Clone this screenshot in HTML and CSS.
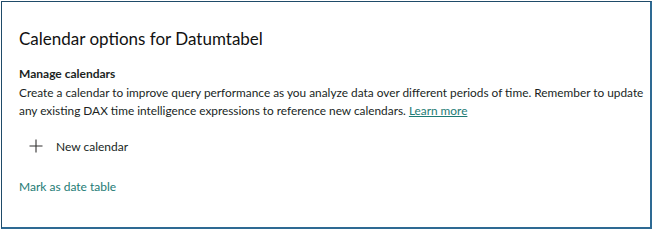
FILE: index.html
```html
<!DOCTYPE html>
<html>
<head>
<meta charset="utf-8">
<link rel="stylesheet" href="styles.css">
</head>
<body>
<div class="frame">
  <h1 class="title">Calendar options for Datumtabel</h1>
  <h2 class="subtitle">Manage calendars</h2>
  <p class="desc">Create a calendar to improve query performance as you analyze data over different periods of time. Remember to update any existing DAX time intelligence expressions to reference new calendars. <a class="link" href="#">Learn more</a></p>
  <div class="new">
    <svg class="plus" width="14" height="14" viewBox="0 0 14 14"><path d="M7 0.5V13.5M0.5 7H13.5" stroke="#323130" stroke-width="1.1" fill="none"/></svg>
    <span>New calendar</span>
  </div>
  <div class="mark">Mark as date table</div>
</div>
</body>
</html>
```
FILE: styles.css
```css
html, body { margin: 0; padding: 0; background: #fff; }
body { width: 653px; height: 230px; overflow: hidden; font-family: Lato, "Open Sans", sans-serif; color: #201f1e; }
.frame {
  box-sizing: border-box;
  margin: 1px 1px 0 1px;
  width: 651px;
  height: 228px;
  border: 1px solid #1f4b69;
  border-right: 2px solid #2e6a93;
  border-bottom: 2px solid #2e6a93;
  padding: 25px 0 0 17px;
}
.title { margin: 0; font-size: 17px; font-weight: 400; line-height: 24px; color: #111; }
.subtitle { margin: 14px 0 0; font-size: 12px; font-weight: 700; line-height: 18px; }
.desc { margin: 1px 0 0; font-size: 11.85px; line-height: 18px; width: 628px; }
.link { color: #1d7b75; text-decoration: underline; }
.new { display: flex; align-items: center; gap: 13px; margin: 16px 0 0 10px; font-size: 12px; height: 20px; }
.mark { margin-top: 22px; font-size: 12px; color: #1d7b75; line-height: 18px; }
```
